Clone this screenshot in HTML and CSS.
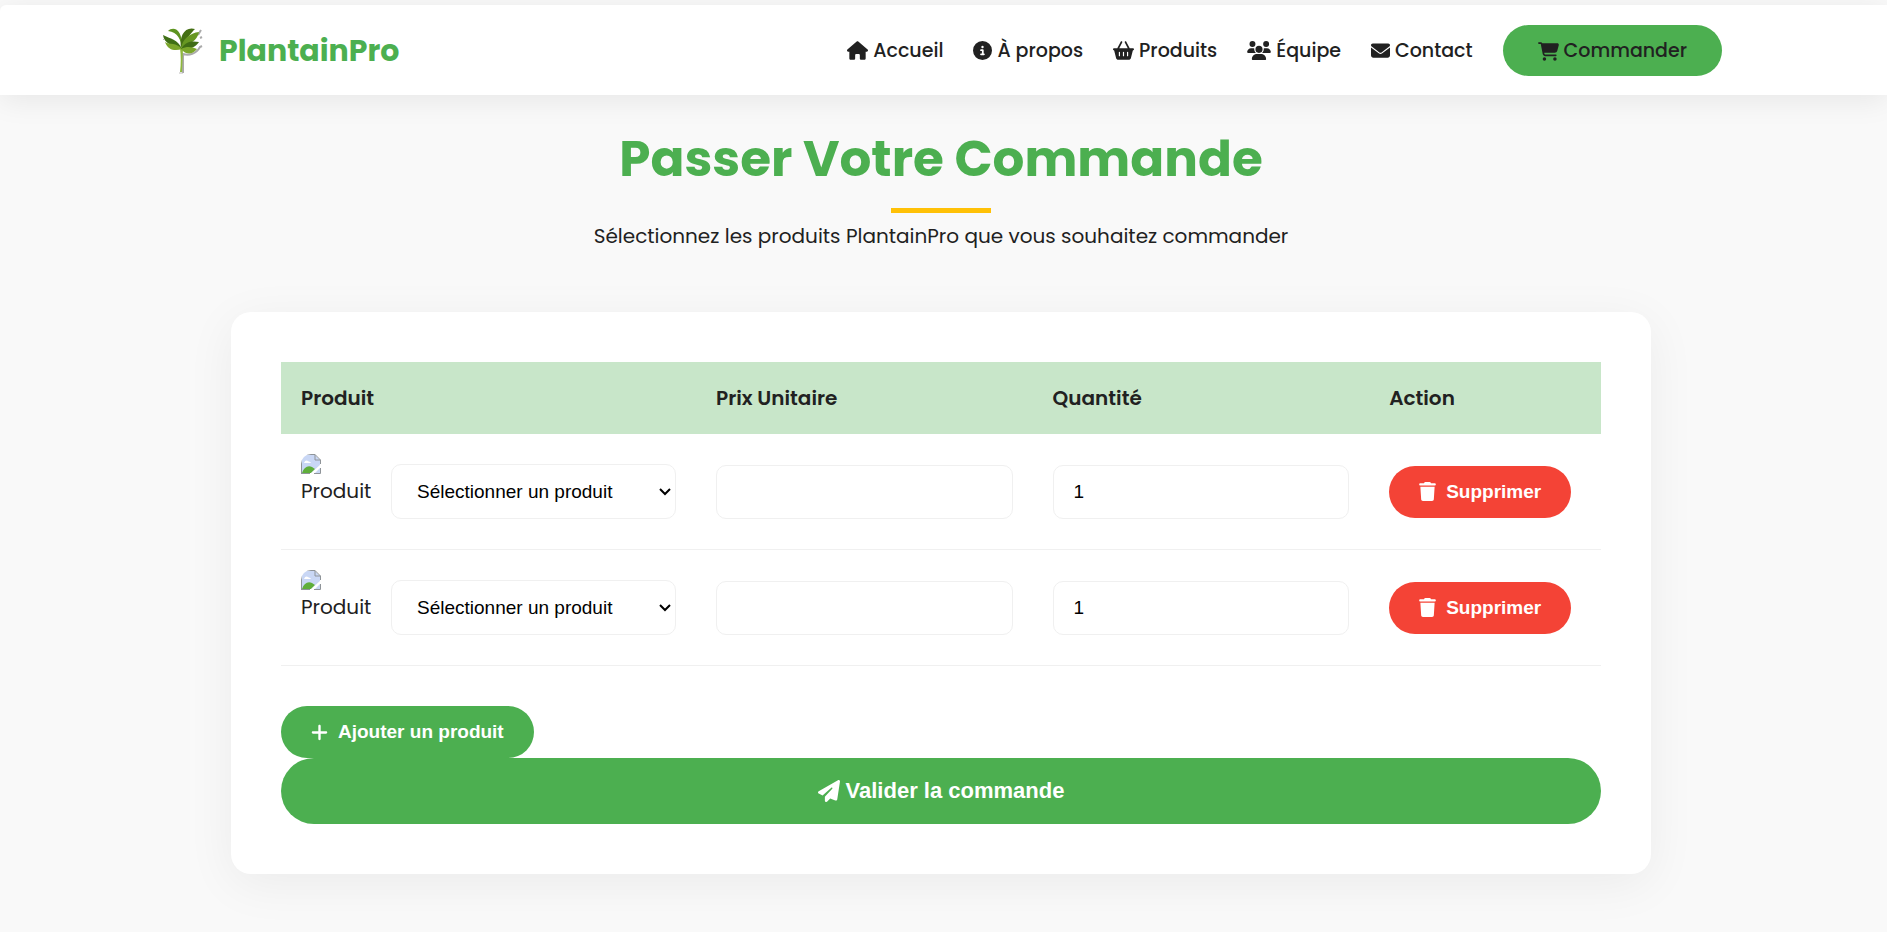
FILE: index.html
```html
<!DOCTYPE html>
<html lang="fr">
<head>
<meta charset="utf-8">
<meta name="viewport" content="width=device-width, initial-scale=1">
<title>PlantainPro - Commande</title>
<link rel="stylesheet" href="styles.css">
</head>
<body>
<svg class="sprite" aria-hidden="true">
  <symbol id="i-home" viewBox="0 0 576 512"><path d="M575.800 255.500c0 18-15 32.100-32 32.100l-32 0 .7 160.200c0 2.700-.2 5.400-.5 8.100l0 16.200c0 22.100-17.900 40-40 40l-16 0c-1.100 0-2.200 0-3.300-.1c-1.400 .1-2.800 .1-4.200 .1L416 512l-24 0c-22.100 0-40-17.900-40-40l0-24 0-64c0-17.700-14.300-32-32-32l-64 0c-17.700 0-32 14.300-32 32l0 64 0 24c0 22.100-17.900 40-40 40l-24 0-31.900 0c-1.500 0-3-.1-4.500-.2c-1.200 .1-2.400 .2-3.600 .2l-16 0c-22.100 0-40-17.900-40-40l0-112c0-.9 0-1.900 .1-2.800l0-69.700-32 0c-18 0-32-14-32-32.100c0-9 3-17 10-24L266.400 8c7-7 15-8 22-8s15 2 21 7L564.800 231.500c8 7 12 15 11 24z"/></symbol>
  <symbol id="i-info" viewBox="0 0 512 512"><path d="M256 512A256 256 0 1 0 256 0a256 256 0 1 0 0 512zM216 336l24 0 0-64-24 0c-13.300 0-24-10.700-24-24s10.700-24 24-24l48 0c13.300 0 24 10.700 24 24l0 88 8 0c13.300 0 24 10.700 24 24s-10.700 24-24 24l-80 0c-13.300 0-24-10.700-24-24s10.700-24 24-24zm40-208a32 32 0 1 1 0 64 32 32 0 1 1 0-64z"/></symbol>
  <symbol id="i-basket" viewBox="0 0 576 512"><path d="M253.300 35.100c6.100-11.800 1.500-26.300-10.200-32.400s-26.300-1.500-32.400 10.200L117.600 192 32 192c-17.700 0-32 14.300-32 32s14.300 32 32 32L83.900 463.500C91 492 116.600 512 146 512L430 512c29.400 0 55-20 62.100-48.500L544 256c17.700 0 32-14.300 32-32s-14.300-32-32-32l-85.600 0L365.300 12.900C359.200 1.200 344.700-3.400 332.900 2.700s-16.300 20.600-10.200 32.400L404.300 192l-232.600 0L253.300 35.100zM192 304l0 96c0 8.800-7.200 16-16 16s-16-7.200-16-16l0-96c0-8.800 7.200-16 16-16s16 7.200 16 16zm96-16c8.800 0 16 7.200 16 16l0 96c0 8.800-7.200 16-16 16s-16-7.200-16-16l0-96c0-8.800 7.200-16 16-16zm128 16l0 96c0 8.800-7.200 16-16 16s-16-7.200-16-16l0-96c0-8.800 7.200-16 16-16s16 7.200 16 16z"/></symbol>
  <symbol id="i-users" viewBox="0 0 640 512"><path d="M144 0a80 80 0 1 1 0 160A80 80 0 1 1 144 0zM512 0a80 80 0 1 1 0 160A80 80 0 1 1 512 0zM0 298.700C0 239.800 47.800 192 106.700 192l42.700 0c15.900 0 31 3.500 44.600 9.700c-1.300 7.200-1.900 14.700-1.900 22.300c0 38.200 16.800 72.500 43.300 96c-.2 0-.4 0-.7 0L21.300 320C9.600 320 0 310.400 0 298.700zM405.300 320c-.2 0-.4 0-.7 0c26.600-23.500 43.300-57.800 43.300-96c0-7.600-.7-15-1.900-22.300c13.600-6.300 28.700-9.700 44.600-9.700l42.700 0C592.200 192 640 239.800 640 298.700c0 11.800-9.600 21.300-21.300 21.300l-213.300 0zM224 224a96 96 0 1 1 192 0 96 96 0 1 1 -192 0zM128 485.300C128 411.700 187.700 352 261.300 352l117.300 0C452.300 352 512 411.700 512 485.300c0 14.700-11.900 26.700-26.700 26.700l-330.700 0c-14.700 0-26.700-11.900-26.700-26.700z"/></symbol>
  <symbol id="i-mail" viewBox="0 0 512 512"><path d="M48 64C21.500 64 0 85.500 0 112c0 15.100 7.100 29.300 19.200 38.400L236.800 313.600c11.400 8.500 27 8.500 38.400 0L492.800 150.400c12.100-9.100 19.200-23.300 19.200-38.400c0-26.500-21.500-48-48-48L48 64zM0 176L0 384c0 35.300 28.700 64 64 64l384 0c35.300 0 64-28.700 64-64l0-208L294.400 339.200c-22.800 17.100-54 17.100-76.800 0L0 176z"/></symbol>
  <symbol id="i-cart" viewBox="0 0 576 512"><path d="M0 24C0 10.700 10.700 0 24 0L69.500 0c22 0 41.500 12.800 50.600 32l411 0c26.300 0 45.500 25 38.600 50.400l-41 152.300c-8.500 31.400-37 53.300-69.500 53.300l-288.500 0 5.400 28.500c2.200 11.300 12.100 19.500 23.600 19.500L488 336c13.300 0 24 10.700 24 24s-10.700 24-24 24l-288.300 0c-34.600 0-64.300-24.600-70.700-58.500L77.400 54.500c-.7-3.800-4-6.500-7.900-6.500L24 48C10.700 48 0 37.300 0 24zM128 464a48 48 0 1 1 96 0 48 48 0 1 1 -96 0zm336-48a48 48 0 1 1 0 96 48 48 0 1 1 0-96z"/></symbol>
  <symbol id="i-trash" viewBox="0 0 448 512"><path d="M135.200 17.700L128 32 32 32C14.300 32 0 46.300 0 64S14.300 96 32 96l384 0c17.700 0 32-14.300 32-32s-14.300-32-32-32l-96 0-7.200-14.300C307.400 6.800 296.300 0 284.200 0L163.800 0c-12.100 0-23.200 6.800-28.600 17.700zM416 128L32 128 53.200 467c1.600 25.300 22.600 45 47.900 45l245.800 0c25.300 0 46.300-19.700 47.900-45L416 128z"/></symbol>
  <symbol id="i-plus" viewBox="0 0 448 512"><path d="M256 80c0-17.700-14.300-32-32-32s-32 14.300-32 32l0 144L48 224c-17.700 0-32 14.300-32 32s14.300 32 32 32l144 0 0 144c0 17.700 14.300 32 32 32s32-14.300 32-32l0-144 144 0c17.700 0 32-14.300 32-32s-14.300-32-32-32l-144 0 0-144z"/></symbol>
  <symbol id="i-plane" viewBox="0 0 512 512"><path d="M498.100 5.600c10.100 7 15.400 19.100 13.500 31.200l-64 416c-1.500 9.700-7.400 18.200-16 23s-18.900 5.400-28 1.600L284 427.700l-68.500 74.100c-8.900 9.700-22.900 12.900-35.200 8.100S160 493.200 160 480l0-83.600c0-4 1.500-7.800 4.200-10.800L331.800 202.800c5.800-6.300 5.600-16-.4-22s-15.700-6.400-22-.7L106 360.800 17.700 316.600C7.100 311.300 .3 300.700 0 288.900s5.900-22.800 16.100-28.700l448-256c10.700-6.100 23.900-5.500 34 1.400z"/></symbol>
  <symbol id="i-broken" viewBox="0 0 20 20">
    <path d="M1 1h13l5 5v13H1z" fill="#c9d7f5"/>
    <path d="M3 9c1-3 3-3 4-2s2 0 3 2z" fill="#fff"/>
    <path d="M1 19c2-6 6-8 10-6l3 2-4 4z" fill="#5fae3b"/>
    <path d="M20 10v3l-7 7H9z" fill="#fff"/>
    <path d="M.5 20V.5H14L19.500 6v4M14 .5V6h5.500M0 19.500h9M13 19.500h6.500V14" fill="none" stroke="#8f9499"/>
  </symbol>
  <symbol id="i-chevron" viewBox="0 0 12 8"><path d="M1 1l5 5 5-5" fill="none" stroke="#000" stroke-width="2"/></symbol>
</svg>

<div class="page">
  <header class="header">
    <div class="container bar">
      <a class="logo" href="#">
        <svg class="logo-mark" viewBox="0 0 42 50" aria-hidden="true">
          <path d="M21 47V28c6 2 13 0 17-7l2-1M38 12l2-1M36 9l3-5" fill="none" stroke="#aaa" stroke-width="2"/>
          <path d="M17 47h4M2 13l-1 1" fill="none" stroke="#bbb"/>
          <path d="M18 22h3l-1 24h-2c1-8 1-16 0-24z" fill="#8fb83c"/>
          <path d="M20 23c-1-9-4-17-14-18 5-5 15-3 14 18z" fill="#5d9420"/>
          <path d="M20 23C16 13 8 13 1 9c1 9 10 11 19 14z" fill="#3f6f16"/>
          <path d="M20 23C14 16 8 19 3 16c3 9 11 9 17 7z" fill="#7ba62b"/>
          <path d="M19 22C17 10 23 0 33 3c-4 4-9 10-14 19z" fill="#446f13"/>
          <path d="M19 23C20 13 28 7 37 6c-2 10-10 11-18 17z" fill="#679722"/>
          <path d="M19 23c5-8 11-8 18-7-4 6-11 8-18 7z" fill="#406d15"/>
          <path d="M19 23c6-3 11-2 16 0-5 6-11 6-16 0z" fill="#7ba62b"/>
        </svg>
        <span>PlantainPro</span>
      </a>
      <nav class="nav">
        <a href="#"><svg class="w21"><use href="#i-home"/></svg>Accueil</a>
        <a href="#"><svg class="w19"><use href="#i-info"/></svg>À propos</a>
        <a href="#"><svg class="w21"><use href="#i-basket"/></svg>Produits</a>
        <a href="#"><svg class="w24"><use href="#i-users"/></svg>Équipe</a>
        <a href="#"><svg class="w19"><use href="#i-mail"/></svg>Contact</a>
        <a class="cta" href="#"><svg class="w21"><use href="#i-cart"/></svg>Commander</a>
      </nav>
    </div>
  </header>

  <main class="main">
    <div class="intro">
      <h1>Passer Votre Commande</h1>
      <p>Sélectionnez les produits PlantainPro que vous souhaitez commander</p>
    </div>
    <form class="card">
      <table class="table">
        <colgroup><col class="c-product"><col class="c-field"><col class="c-field"><col class="c-action"></colgroup>
        <thead><tr><th>Produit</th><th>Prix Unitaire</th><th>Quantité</th><th>Action</th></tr></thead>
        <tbody>
          <tr>
            <td><div class="product"><span class="thumb"><svg><use href="#i-broken"/></svg>Produit</span>
              <span class="pick"><select aria-label="Produit"><option>Sélectionner un produit</option></select><svg><use href="#i-chevron"/></svg></span></div></td>
            <td><input type="text" aria-label="Prix unitaire" readonly></td>
            <td><input type="text" inputmode="numeric" aria-label="Quantité" value="1"></td>
            <td><button class="btn danger" type="button"><svg class="w17"><use href="#i-trash"/></svg>Supprimer</button></td>
          </tr>
          <tr>
            <td><div class="product"><span class="thumb"><svg><use href="#i-broken"/></svg>Produit</span>
              <span class="pick"><select aria-label="Produit"><option>Sélectionner un produit</option></select><svg><use href="#i-chevron"/></svg></span></div></td>
            <td><input type="text" aria-label="Prix unitaire" readonly></td>
            <td><input type="text" inputmode="numeric" aria-label="Quantité" value="1"></td>
            <td><button class="btn danger" type="button"><svg class="w17"><use href="#i-trash"/></svg>Supprimer</button></td>
          </tr>
        </tbody>
      </table>
      <button class="btn" type="button"><svg class="w17"><use href="#i-plus"/></svg>Ajouter un produit</button>
      <button class="btn submit" type="submit"><svg class="w22"><use href="#i-plane"/></svg>Valider la commande</button>
    </form>
  </main>
</div>
</body>
</html>
```
FILE: styles.css
```css
* { box-sizing: border-box; margin: 0; padding: 0; }
:root { --green: #4caf50; --ink: #212121; --line: #f0f0f0; }
body {
  background: #fff;
  color: var(--ink);
  font-family: Poppins, Inter, "Noto Sans", sans-serif;
  font-size: 20px;
  line-height: 32px;
}
.sprite { display: none; }
svg { fill: currentColor; flex: none; }
.page {
  min-height: 100vh;
  margin-right: 4px;
  padding-top: 5px;
  background: #f9f9f9;
  overflow: hidden;
}
.header {
  background: #fff;
  border-top-left-radius: 6px;
  box-shadow: 0 5px 30px rgba(0, 0, 0, .08);
  padding: 20px 3px 19px 0;
}
.container { max-width: 1560px; margin: 0 auto; }
.bar { display: flex; align-items: center; justify-content: space-between; }
.logo {
  display: flex; align-items: center; gap: 15px;
  color: var(--green); font-size: 30px; font-weight: 700; text-decoration: none;
}
.logo-mark { width: 42px; height: 50px; }
.nav { display: flex; align-items: center; gap: 30px; font-size: 19px; }
.nav a {
  display: flex; align-items: center; gap: 5px;
  color: var(--ink); font-weight: 500; text-decoration: none;
}
.nav svg { height: 19px; }
.nav .cta { background: var(--green); border-radius: 50px; padding: 10px 35px 9px; }
.w17 { width: 17px; height: 19px; }
.w19 { width: 19px; }
.w21 { width: 21px; }
.w22 { width: 22px; height: 22px; }
.w24 { width: 24px; }
.main { padding: 24px 45px 58px 40px; }
.intro { text-align: center; margin-bottom: 59px; }
.intro h1 { color: var(--green); font-size: 50px; line-height: 80px; font-weight: 700; }
.intro h1::after {
  content: ""; display: block; width: 100px; height: 5px;
  margin: 9px auto 6px; background: #ffc107;
}
.intro p { font-size: 20px; line-height: 34px; }
.card {
  max-width: 1420px; margin: 0 auto; padding: 50px;
  background: #fff; border-radius: 20px;
  box-shadow: 0 10px 50px rgba(0, 0, 0, .06);
}
.table { width: 100%; border-collapse: collapse; table-layout: fixed; margin-bottom: 40px; }
.c-product { width: 31.440%; }
.c-field { width: 25.500%; }
.table th { background: #c8e6c9; padding: 20px; font-weight: 600; text-align: left; }
.table td { padding: 20px; border-bottom: 1px solid var(--line); }
.product { display: flex; align-items: center; gap: 20px; }
.thumb { width: 70px; height: 75px; flex: none; line-height: 34px; border-radius: 10px; overflow: hidden; }
.thumb svg { display: block; width: 20px; height: 20px; }
.pick { position: relative; flex: 1; display: flex; }
.pick svg { position: absolute; right: 5px; top: 24px; width: 12px; height: 8px; pointer-events: none; }
select, input {
  width: 100%; height: 54px;
  border: 1px solid var(--line); border-radius: 10px;
  background: #fff; color: #000; font-size: 19px; outline: none;
  font-family: "Liberation Sans", Arial, sans-serif;
}
select { appearance: none; height: 55px; padding: 0 20px 0 25px; }
input { padding: 0 20px; }
.btn {
  display: flex; align-items: center; gap: 10px; height: 52px; padding: 0 30px;
  border: 0; border-radius: 50px; background: var(--green); color: #fff;
  font-family: "Liberation Sans", Arial, sans-serif; font-size: 19px; font-weight: 700;
  white-space: nowrap; cursor: pointer;
}
.danger { background: #f44336; }
.submit { width: 100%; height: 66px; justify-content: center; gap: 6px; font-size: 22px; }
```
